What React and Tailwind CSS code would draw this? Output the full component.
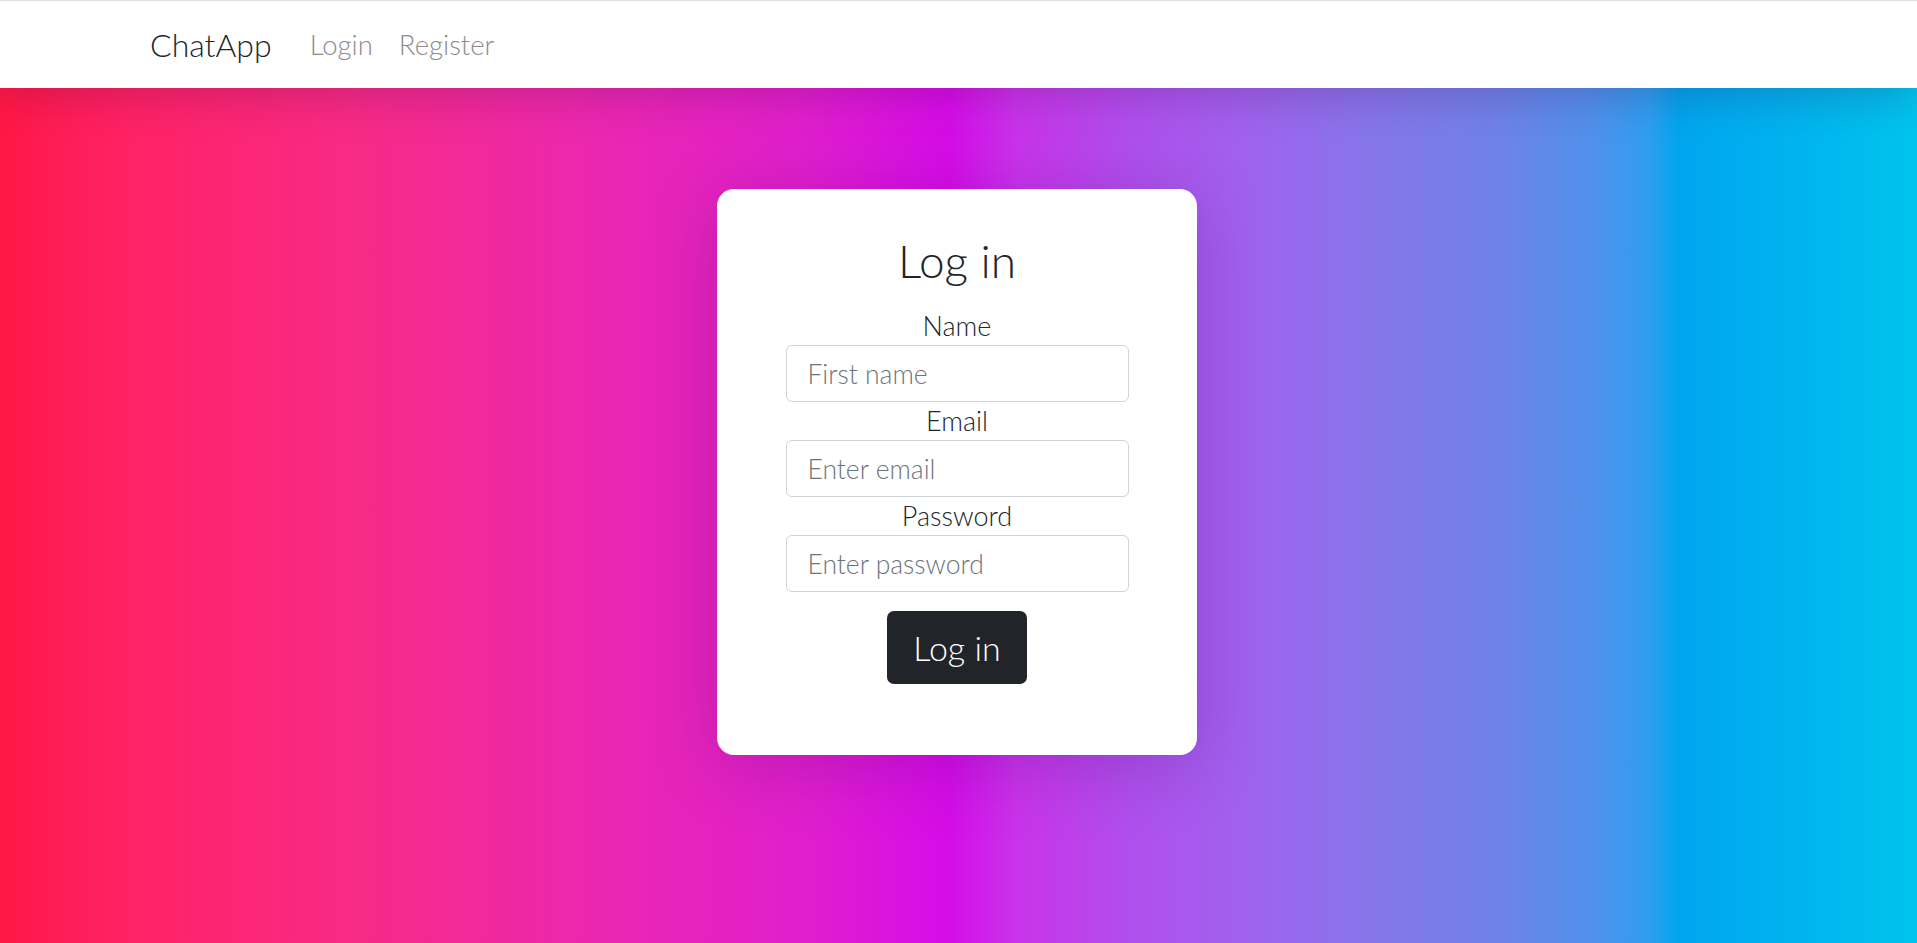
import React, { useState } from 'react';

const Field = ({ label, type, name, placeholder, value, onChange }) => (
  <>
    <label htmlFor={name} className="block h-[38px] leading-[37px] text-[27px] text-[#212529] text-center">
      {label}
    </label>
    <input
      type={type}
      id={name}
      name={name}
      value={value}
      onChange={onChange}
      placeholder={placeholder}
      className="w-full h-[57px] px-[21px] text-[26.5px] font-light text-[#212529] bg-white border border-[#ced4da] rounded-md placeholder:text-[#6c757d] focus:outline-none"
    />
  </>
);

const App = () => {
  const [formData, setFormData] = useState({ name: '', email: '', password: '' });

  const handleChange = (e) => {
    const { name, value } = e.target;
    setFormData({ ...formData, [name]: value });
  };

  return (
    <div className="min-h-screen flex flex-col font-['Lato','Liberation_Sans',sans-serif] font-light">
      {/* Navbar */}
      <nav className="relative z-10 h-[88px] bg-white border-t border-[#dee2e6] shadow-[0_8px_44px_rgba(60,0,60,0.22)] flex items-center pl-[150px]">
        <a href="#" className="text-[32px] text-[#212529] mr-[38px]">ChatApp</a>
        <a href="#" className="text-[27.5px] text-[#8c8c8c] mr-[26px]">Login</a>
        <a href="#" className="text-[27.5px] text-[#8c8c8c]">Register</a>
      </nav>

      {/* Body */}
      <main className="flex-1 flex justify-center pt-[101px] bg-[linear-gradient(90deg,#ff1744_0%,#ff1d56_3%,#ff2266_7%,#f82a85_18%,#ec28ad_30%,#e01fcd_42%,#d60ce8_49.5%,#c933ea_53%,#b04fed_59%,#a062ee_65%,#8874eb_71%,#6f82ea_78%,#5190ec_83%,#2f9ef0_86%,#00a6ef_87.6%,#00b2ef_93%,#00c4ee_100%)]">
        <div className="w-[480px] h-[566px] mr-[3px] bg-white rounded-[17px] shadow-[0_10px_70px_rgba(50,0,90,0.22)] pt-[47px] flex flex-col items-center">
          <h1 className="text-[46px] leading-[50px] text-[#212529] font-light">Log in</h1>
          <form className="w-[343px] mt-[21px]" onSubmit={(e) => e.preventDefault()}>
            <Field label="Name" type="text" name="name" placeholder="First name" value={formData.name} onChange={handleChange} />
            <Field label="Email" type="email" name="email" placeholder="Enter email" value={formData.email} onChange={handleChange} />
            <Field label="Password" type="password" name="password" placeholder="Enter password" value={formData.password} onChange={handleChange} />
            <div className="flex justify-center mt-[19px]">
              <button
                type="submit"
                className="w-[140px] h-[73px] bg-[#212529] text-white text-[34px] font-light rounded-[7px]"
              >
                Log in
              </button>
            </div>
          </form>
        </div>
      </main>
    </div>
  );
};

export default App;
